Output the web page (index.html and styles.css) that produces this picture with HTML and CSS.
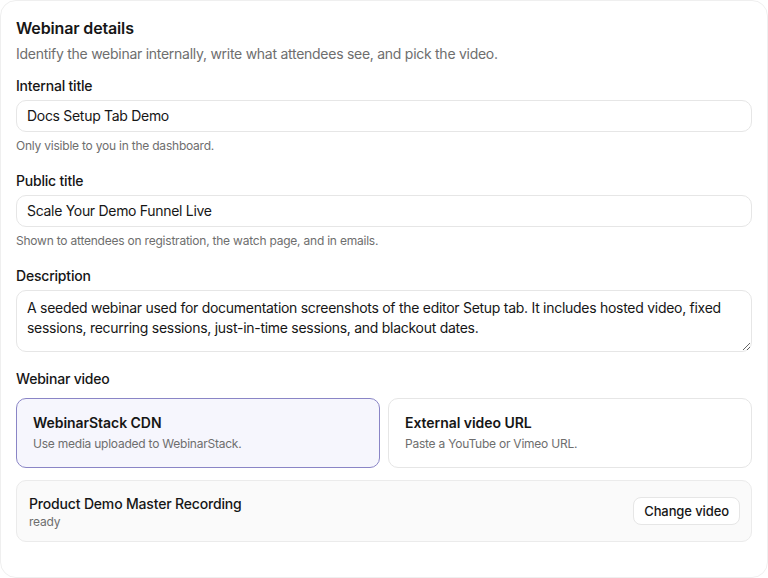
FILE: index.html
```html
<!DOCTYPE html>
<html lang="en">
<head>
<meta charset="utf-8">
<title>Webinar details</title>
<link rel="stylesheet" href="styles.css">
</head>
<body>
<section class="card">
  <h1 class="title">Webinar details</h1>
  <p class="subtitle">Identify the webinar internally, write what attendees see, and pick the video.</p>

  <div class="field">
    <label class="label">Internal title</label>
    <div class="input">Docs Setup Tab Demo</div>
    <p class="help">Only visible to you in the dashboard.</p>
  </div>

  <div class="field">
    <label class="label">Public title</label>
    <div class="input">Scale Your Demo Funnel Live</div>
    <p class="help">Shown to attendees on registration, the watch page, and in emails.</p>
  </div>

  <div class="field">
    <label class="label">Description</label>
    <textarea class="textarea">A seeded webinar used for documentation screenshots of the editor Setup tab. It includes hosted video, fixed sessions, recurring sessions, just-in-time sessions, and blackout dates.</textarea>
  </div>

  <div class="field video-field">
    <label class="label">Webinar video</label>
    <div class="options">
      <div class="option selected">
        <div class="option-title">WebinarStack CDN</div>
        <div class="option-desc">Use media uploaded to WebinarStack.</div>
      </div>
      <div class="option">
        <div class="option-title">External video URL</div>
        <div class="option-desc">Paste a YouTube or Vimeo URL.</div>
      </div>
    </div>
    <div class="video">
      <div class="video-info">
        <div class="video-name">Product Demo Master Recording</div>
        <div class="video-status">ready</div>
      </div>
      <button class="btn">Change video</button>
    </div>
  </div>
</section>
</body>
</html>
```

FILE: styles.css
```css
* { box-sizing: border-box; }
html, body { margin: 0; padding: 0; background: #ffffff; }
body {
  font-family: Inter, "Noto Sans", sans-serif;
  color: #161616;
  width: 768px;
  height: 578px;
  overflow: hidden;
}
.card {
  width: 768px;
  height: 578px;
  border: 1px solid #efefef;
  border-radius: 16px;
  background: #fff;
  padding: 15px 15px;
}
.title {
  margin: 0;
  font-size: 16px;
  line-height: 24px;
  font-weight: 600;
  letter-spacing: -0.15px;
}
.subtitle {
  margin: 4px 0 0;
  font-size: 14px;
  line-height: 20px;
  color: #6e6e6e;
  letter-spacing: -0.27px;
}
.field {
  display: flex;
  flex-direction: column;
  margin-top: 12px;
}
.field + .field { margin-top: 17px; }
.label {
  font-size: 14px;
  line-height: 20px;
  font-weight: 500;
  color: #161616;
  margin-bottom: 4px;
  letter-spacing: -0.2px;
}
.input {
  height: 32px;
  border: 1px solid #e6e6e6;
  border-radius: 10px;
  padding: 0 10px;
  font-size: 14px;
  line-height: 30px;
  color: #161616;
  letter-spacing: -0.3px;
}
.help {
  margin: 6px 0 0;
  font-size: 12px;
  line-height: 16px;
  color: #6e6e6e;
  letter-spacing: -0.22px;
}
.textarea {
  display: block;
  width: 100%;
  height: 62px;
  border: 1px solid #e6e6e6;
  border-radius: 10px;
  padding: 7px 10px 8px;
  font-family: inherit;
  font-size: 14px;
  line-height: 20px;
  color: #161616;
  letter-spacing: -0.28px;
  resize: vertical;
  outline: none;
  overflow: hidden;
}
.video-field .label { margin-bottom: 9px; }
.options {
  display: grid;
  grid-template-columns: 1fr 1fr;
  gap: 8px;
}
.option {
  height: 70px;
  border: 1px solid #e6e6e6;
  border-radius: 10px;
  padding: 14px 16px 0;
  background: #fff;
}
.option.selected {
  border-color: #8a85c6;
  background: #f6f6fd;
}
.option-title {
  font-size: 14px;
  line-height: 20px;
  font-weight: 600;
  letter-spacing: -0.05px;
}
.option-desc {
  margin-top: 3px;
  font-size: 12px;
  line-height: 16px;
  color: #6e6e6e;
  letter-spacing: -0.23px;
}
.video {
  margin-top: 12px;
  height: 62px;
  border: 1px solid #ebebeb;
  border-radius: 10px;
  background: #fafafa;
  padding: 1px 11px 0 12px;
  display: flex;
  align-items: center;
  justify-content: space-between;
}
.video-name {
  font-size: 14px;
  line-height: 20px;
  font-weight: 500;
  letter-spacing: -0.17px;
}
.video-status {
  font-size: 12px;
  line-height: 16px;
  color: #6e6e6e;
  letter-spacing: -0.2px;
}
.btn {
  height: 28px;
  padding: 0 10px;
  border: 1px solid #e6e6e6;
  border-radius: 8px;
  background: #fff;
  font-family: inherit;
  font-size: 13px;
  font-weight: 500;
  color: #161616;
  letter-spacing: -0.1px;
  margin-top: -1px;
}
```
